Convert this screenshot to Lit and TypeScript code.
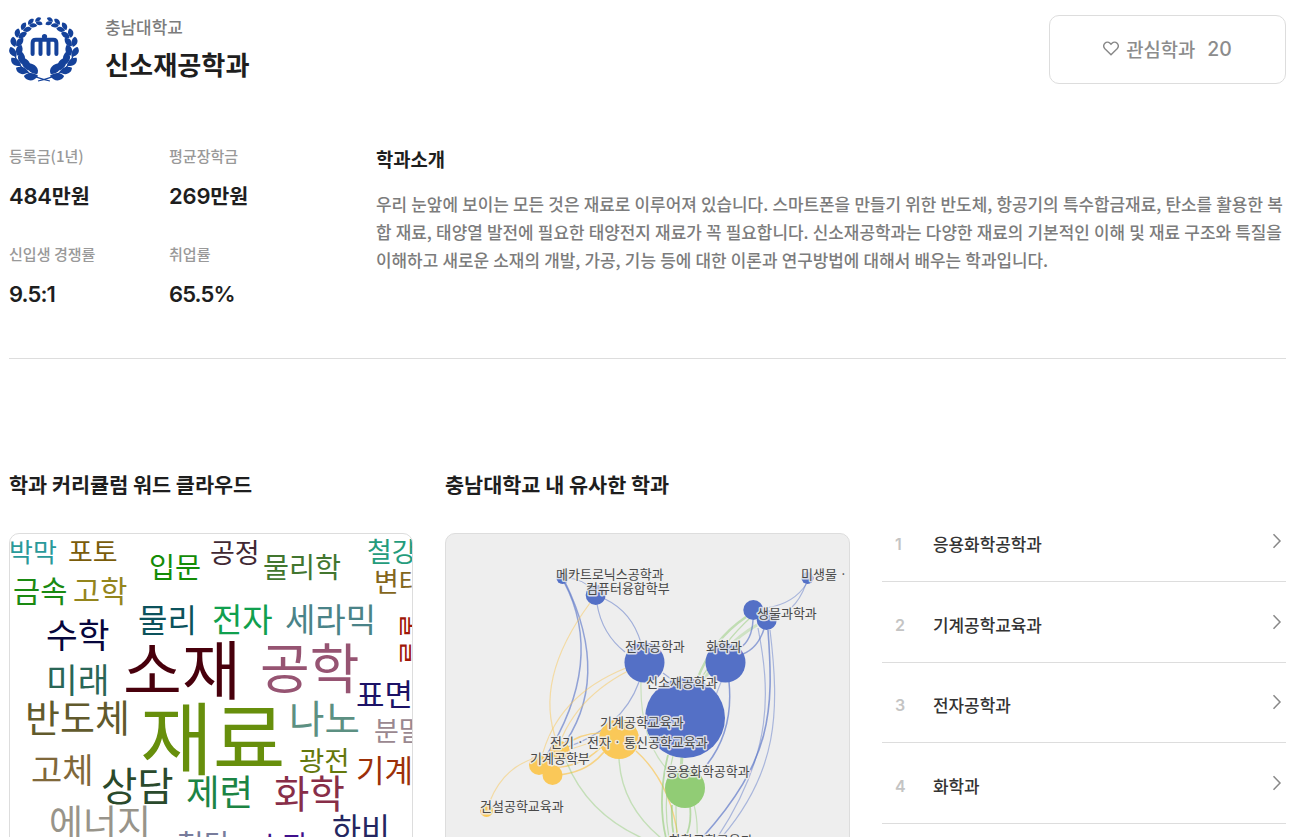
import { css, html, svg, LitElement } from "lit";
import { customElement, property } from "lit/decorators.js";

const words: [string, number, number, number, string][] = [
  // text, left, vertical centre, size, colour
  ["박막", -1, 18, 26, "#2a9a9a"],
  ["포토", 58, 18, 27, "#7a5c0a"],
  ["입문", 139, 33, 28.3, "#138c06"],
  ["공정", 200, 19, 27, "#402833"],
  ["물리학", 253, 33, 28.3, "#42762f"],
  ["철강", 357, 18, 27, "#249c7c"],
  ["변태", 364, 48, 27, "#84661c"],
  ["금속", 3, 57, 29.5, "#1a8a12"],
  ["고학", 63, 57, 29.5, "#94851c"],
  ["물리", 128, 86, 32, "#0c525c"],
  ["전자", 202, 86, 33, "#10a04e"],
  ["세라믹", 275, 86, 33, "#4a8388"],
  ["수학", 36, 101, 34.5, "#06063c"],
  ["미래", 36, 146, 34.5, "#2a6656"],
  ["소재", 113, 136, 64, "#48000c"],
  ["공학", 250, 135, 54, "#965472"],
  ["재료", 130, 205, 79, "#678f0c"],
  ["표면", 346, 160, 31, "#1c1266"],
  ["반도체", 15, 184, 38, "#615a2c"],
  ["나노", 279, 185, 38.5, "#5c9082"],
  ["분말", 364, 197, 27, "#9a8890"],
  ["광전", 289, 227, 27.5, "#64780c"],
  ["기계", 346, 236, 31, "#9c3008"],
  ["고체", 21, 236, 34, "#80683a"],
  ["상담", 91, 252, 39.5, "#2a4a2c"],
  ["제련", 176, 258, 36.5, "#1c8444"],
  ["화학", 264, 260, 38.5, "#882e48"],
  ["에너지", 39, 289, 37, "#98948a"],
  ["하비", 322, 295, 31.5, "#242660"],
  ["첨단", 167, 311, 29, "#787c9c"],
  ["소자", 247, 311, 28, "#40108c"],
];

const BLUE = "#5470c6";
const GREEN = "#91cc75";
const YELLOW = "#fac858";

// path, colour, width, opacity
const links: [string, string, number, number][] = [
  ["M564 582Q606 661 545 758", BLUE, 1.5, 0.6],
  ["M565 582Q613 680 560 750", BLUE, 1.5, 0.6],
  ["M566 578Q582 578 596 592", BLUE, 1, 0.5],
  ["M590 603Q533 680 557 742", YELLOW, 1.2, 0.5],
  ["M597 604Q602 634 625 652", BLUE, 1.2, 0.5],
  ["M605 599Q632 612 641 643", BLUE, 1.2, 0.5],
  ["M626 668Q556 696 541 760", YELLOW, 1.2, 0.5],
  ["M628 671Q564 704 553 768", YELLOW, 1.2, 0.5],
  ["M639 682Q622 729 565 748", BLUE, 1.2, 0.5],
  ["M601 733Q580 733 562 747", YELLOW, 1.6, 0.7],
  ["M601 740Q575 746 540 762", YELLOW, 1.2, 0.5],
  ["M602 746Q582 768 548 768", YELLOW, 1.6, 0.7],
  ["M604 752Q585 775 552 775", YELLOW, 1.6, 0.7],
  ["M490 801Q503 768 535 758", YELLOW, 1.2, 0.5],
  ["M636 751C655 768 672 795 678 837", YELLOW, 1.4, 0.7],
  ["M641 682C640 720 650 752 668 770", GREEN, 1.2, 0.4],
  ["M565 758Q585 812 642 838", GREEN, 1.4, 0.45],
  ["M619 758Q621 805 661 838", GREEN, 1.4, 0.45],
  ["M668 755Q657 800 666 838", GREEN, 1.8, 0.6],
  ["M673 756Q662 800 669 838", GREEN, 1.2, 0.5],
  ["M682 756L681 770", GREEN, 3, 0.5],
  ["M672 805Q671 820 674 838", GREEN, 1.8, 0.6],
  ["M676 806Q676 820 677 838", GREEN, 1.2, 0.5],
  ["M690 806Q692 825 685 838", GREEN, 1.8, 0.6],
  ["M694 805Q698 820 697 838", GREEN, 1.2, 0.45],
  ["M746 617Q712 640 697 680", GREEN, 2.4, 0.5],
  ["M757 625Q722 645 702 684", GREEN, 3, 0.35],
  ["M750 618Q726 640 700 680", GREEN, 1.2, 0.5],
  ["M753 620Q752 640 740 648", BLUE, 1.5, 0.6],
  ["M764 629Q758 648 743 654", BLUE, 1.5, 0.6],
  ["M758 628C770 690 774 752 717 838", BLUE, 1.2, 0.45],
  ["M768 630C774 712 772 760 702 838", BLUE, 1.6, 0.65],
  ["M770 630C780 712 778 772 721 838", BLUE, 1.2, 0.45],
  ["M807 583Q794 604 766 608", BLUE, 1.1, 0.45],
  ["M806 584Q800 600 791 608", BLUE, 1.1, 0.45],
  ["M729 682Q734 732 705 767", BLUE, 1.5, 0.65],
  ["M721 682L716 695", BLUE, 1.2, 0.4],
  ["M663 673L671 679", BLUE, 1.2, 0.5],
];

const nodes: [number, number, number, string][] = [
  [562.5, 578, 6, BLUE],
  [595.7, 595, 10, BLUE],
  [644.5, 662.5, 20, BLUE],
  [685, 718, 40, BLUE],
  [725.5, 662.5, 20, BLUE],
  [753.3, 610, 10, BLUE],
  [766.7, 620, 10, BLUE],
  [807.5, 578, 6, BLUE],
  [619, 739, 20, YELLOW],
  [560, 751, 10, YELLOW],
  [539, 765, 10, YELLOW],
  [552.5, 775, 10, YELLOW],
  [486.5, 810.5, 6.5, YELLOW],
  [685, 788, 20, GREEN],
];

const labels: [string, number, number][] = [
  ["메카트로닉스공학과", 556, 575],
  ["컴퓨터융합학부", 586, 589],
  ["미생물 ·", 801, 575],
  ["생물과학과", 757, 614],
  ["전자공학과", 625, 647],
  ["화학과", 706, 647],
  ["신소재공학과", 646, 683],
  ["기계공학교육과", 600, 723],
  ["전기 · 전자 · 통신공학교육과", 550, 743],
  ["기계공학부", 530, 759],
  ["응용화학공학과", 666, 772],
  ["건설공학교육과", 480, 807],
  ["화학공학교육과", 669, 841],
];

@customElement("school-emblem")
export class SchoolEmblem extends LitElement {
  render() {
    // leaf pairs run up each branch, from the stem to the top
    const angles = [14, 34, 54, 74, 94, 113, 131, 148, 163];
    const branch = angles.map((a, i) => {
      const s = 1.28 - i * 0.08;
      return svg`
        <g transform="rotate(${-a}) translate(0 28.5) scale(${s})">
          <path d="M0 0C-1 -5 4 -8 9 -7C10 -2 6 1 0 0Z" />
          <path d="M-1 1C1 7 7 8 10 4C8 0 4 -1 -1 1Z" />
        </g>`;
    });
    return html`
      <svg width="70" height="67" viewBox="0 0 70 67" fill="#15429a">
        <g transform="translate(35 33)">
          <g transform="scale(.98 .95)">
            ${branch}
            <g transform="scale(-1 1)">${branch}</g>
          </g>
          <path
            d="M-29 8Q-23 27 6 33M29 8Q23 27 -6 33"
            fill="none"
            stroke="#15429a"
            stroke-width="1.2"
          />
        </g>
        <path
          d="M23.6 39V28Q23.6 24.8 26.8 24.8H44.2Q47.4 24.8 47.4 28V39M31.5 39V25M39.5 39V25"
          fill="none"
          stroke="#15429a"
          stroke-width="4"
          stroke-linecap="round"
        />
        <circle cx="35.5" cy="21.5" r="2.6" />
      </svg>
    `;
  }

  static styles = css`
    :host {
      display: block;
      width: 70px;
      height: 67px;
    }
    svg {
      display: block;
    }
  `;
}

@customElement("word-cloud")
export class WordCloud extends LitElement {
  render() {
    return html`
      <svg width="403" height="304">
        ${words.map(
          ([text, x, y, size, color]) => svg`
            <text x=${x} y=${y + size * 0.375} font-size=${size} fill=${color}>${text}</text>`
        )}
        <text transform="translate(392 79) rotate(90)" font-size="28" fill="#a01808">
          물질
        </text>
      </svg>
    `;
  }

  static styles = css`
    :host {
      display: block;
    }
    svg {
      display: block;
      font-family: "Noto Sans CJK KR", sans-serif;
    }
  `;
}

@customElement("similar-graph")
export class SimilarGraph extends LitElement {
  render() {
    return html`
      <svg width="403" height="304" viewBox="446 534 403 304">
        ${links.map(
          ([d, color, width, opacity]) => svg`
            <path d=${d} fill="none" stroke=${color} stroke-width=${width} opacity=${opacity} />`
        )}
        ${nodes.map(
          ([x, y, r, color]) => svg`<circle cx=${x} cy=${y} r=${r} fill=${color} />`
        )}
        ${labels.map(
          ([text, x, y]) => svg`<text class="label" x=${x} y=${y + 4}>${text}</text>`
        )}
      </svg>
    `;
  }

  static styles = css`
    :host {
      display: block;
    }
    svg {
      display: block;
    }
    .label {
      font-family: "Noto Sans CJK KR", sans-serif;
      font-size: 13px;
      fill: #484848;
      stroke: rgba(238, 238, 238, 0.85);
      stroke-width: 3px;
      stroke-linejoin: round;
      paint-order: stroke;
    }
  `;
}

@customElement("dept-row")
export class DeptRow extends LitElement {
  @property({ type: Number })
  rank = 1;

  @property({ type: String })
  name = "";

  render() {
    return html`
      <span class="rank">${this.rank}</span>
      <span class="name">${this.name}</span>
      <svg class="arrow" width="10" height="16" viewBox="0 0 10 16">
        <path d="M1.5 1.2L8 8L1.5 14.8" fill="none" stroke="#888" stroke-width="1.5" />
      </svg>
    `;
  }

  static styles = css`
    :host {
      display: flex;
      align-items: center;
      box-sizing: border-box;
      height: 80.6px;
      padding: 6px 4px 0 13px;
      border-bottom: 1px solid #ddd;
    }
    .rank {
      width: 38px;
      font: 600 16px/24px Inter, sans-serif;
      color: #c4c4c4;
    }
    .name {
      flex: 1;
      font: 500 16.92px/24px "Noto Sans CJK KR", sans-serif;
      color: #333;
    }
    .arrow {
      margin-bottom: 6px;
    }
  `;
}

@customElement("app-root")
export class AppRoot extends LitElement {
  private stats = [
    { label: "등록금(1년)", value: "484", unit: "만원" },
    { label: "평균장학금", value: "269", unit: "만원" },
    { label: "신입생 경쟁률", value: "9.5:1", unit: "" },
    { label: "취업률", value: "65.5%", unit: "" },
  ];

  private similar = ["응용화학공학과", "기계공학교육과", "전자공학과", "화학과"];

  render() {
    return html`
      <header class="header">
        <school-emblem></school-emblem>
        <div class="titles">
          <div class="school">충남대학교</div>
          <h1 class="dept">신소재공학과</h1>
        </div>
        <button class="like">
          <svg width="16" height="15" viewBox="0 0 16 15">
            <path
              d="M8 13.8L1.9 7.7C.5 6.2.5 3.8 1.9 2.3C3.3.9 5.6.9 7 2.3L8 3.3L9 2.3C10.4.9 12.7.9 14.1 2.3C15.5 3.8 15.5 6.2 14.1 7.7Z"
              fill="none"
              stroke="#888"
              stroke-width="1.4"
            />
          </svg>
          <span>관심학과</span>
          <span class="count">20</span>
        </button>
      </header>

      <section class="summary">
        <div class="stats">
          ${this.stats.map(
            (s) => html`
              <div>
                <div class="label">${s.label}</div>
                <div class="value">
                  ${s.unit
                    ? html`<span>${s.value}</span><span class="unit">${s.unit}</span>`
                    : html`<span class="ratio">${s.value}</span>`}
                </div>
              </div>
            `
          )}
        </div>
        <div class="intro">
          <h2 class="intro-title">학과소개</h2>
          <p class="intro-text">
            <span class="line">우리 눈앞에 보이는 모든 것은 재료로 이루어져 있습니다. 스마트폰을 만들기 위한 반도체, 항공기의 특수합금재료, 탄소를 활용한 복</span>
            <span class="line">합 재료, 태양열 발전에 필요한 태양전지 재료가 꼭 필요합니다. 신소재공학과는 다양한 재료의 기본적인 이해 및 재료 구조와 특질을</span>
            <span class="line">이해하고 새로운 소재의 개발, 가공, 기능 등에 대한 이론과 연구방법에 대해서 배우는 학과입니다.</span>
          </p>
        </div>
      </section>

      <section class="columns">
        <div>
          <h2 class="title">학과 커리큘럼 워드 클라우드</h2>
          <div class="card"><word-cloud></word-cloud></div>
        </div>
        <div>
          <h2 class="title">충남대학교 내 유사한 학과</h2>
          <div class="card gray"><similar-graph></similar-graph></div>
        </div>
        <div class="list">
          ${this.similar.map(
            (name, i) => html`<dept-row .rank=${i + 1} .name=${name}></dept-row>`
          )}
        </div>
      </section>
    `;
  }

  static styles = css`
    :host {
      display: block;
      box-sizing: border-box;
      height: 837px;
      padding: 15px 16px 0 9px;
      overflow: hidden;
      background: #fff;
      color: #1e1e1e;
      font-family: "Noto Sans CJK KR", sans-serif;
    }
    h1,
    h2,
    p {
      margin: 0;
    }
    .header {
      display: flex;
      align-items: flex-start;
      height: 69px;
    }
    .titles {
      flex: 1;
      margin-left: 26px;
    }
    .school {
      font-size: 16.92px;
      font-weight: 500;
      line-height: 24px;
      color: #7c7c7c;
    }
    .dept {
      margin-top: 6px;
      font-size: 26.2px;
      line-height: 38px;
      font-weight: 700;
    }
    .like {
      display: flex;
      align-items: center;
      justify-content: center;
      box-sizing: border-box;
      width: 237px;
      height: 69px;
      padding: 0 0 2px;
      border: 1px solid #ddd;
      border-radius: 10px;
      background: #fff;
      color: #8c8c8c;
      font: 500 18.8px/28px "Noto Sans CJK KR", sans-serif;
    }
    .like svg {
      margin-right: 7px;
    }
    .count {
      margin-left: 12px;
      padding-top: 1px;
      font: 500 19.4px/28px Inter, sans-serif;
    }
    .summary {
      display: flex;
      box-sizing: border-box;
      height: 275px;
      padding-top: 60px;
      border-bottom: 1px solid #ddd;
    }
    .stats {
      display: grid;
      grid-template-columns: 160px 160px;
      grid-auto-rows: 98px;
      width: 367px;
    }
    .label {
      font-size: 15.05px;
      font-weight: 500;
      line-height: 24px;
      color: #999;
    }
    .value {
      margin-top: 12px;
      font: 600 22px/32px Inter, sans-serif;
      letter-spacing: -0.2px;
    }
    .ratio {
      letter-spacing: -0.9px;
    }
    .unit {
      font: 600 20.7px/30px "Noto Sans CJK KR", sans-serif;
      letter-spacing: 0;
    }
    .intro {
      flex: 1;
    }
    .intro-title {
      padding-top: 1px;
      font-size: 18.8px;
      line-height: 28px;
      font-weight: 700;
    }
    .intro-text {
      margin-top: 17px;
      font-size: 16.92px;
      font-weight: 500;
      line-height: 28px;
      word-spacing: 0.4px;
      color: #7c7c7c;
    }
    .line {
      display: block;
      white-space: nowrap;
    }
    .columns {
      display: grid;
      grid-template-columns: 404px 405px 404px;
      column-gap: 32px;
      padding-top: 110px;
    }
    .title {
      font-size: 20.75px;
      line-height: 30px;
      font-weight: 700;
    }
    .card {
      box-sizing: border-box;
      height: 404px;
      margin-top: 34px;
      border: 1px solid #ddd;
      border-radius: 10px;
      overflow: hidden;
    }
    .gray {
      background: #eee;
    }
    .list {
      padding-top: 32.4px;
    }
  `;
}

declare global {
  interface HTMLElementTagNameMap {
    "app-root": AppRoot;
    "dept-row": DeptRow;
    "school-emblem": SchoolEmblem;
    "similar-graph": SimilarGraph;
    "word-cloud": WordCloud;
  }
}
